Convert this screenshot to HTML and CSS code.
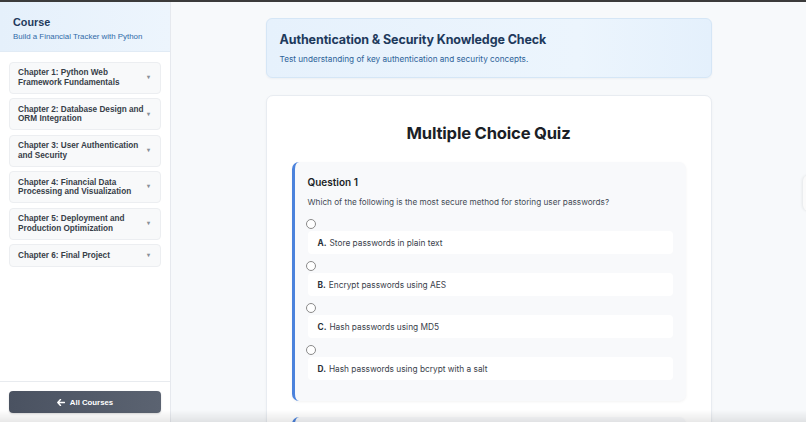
FILE: index.html
```html
<!DOCTYPE html>
<html lang="en">
<head>
<meta charset="utf-8">
<title>Authentication &amp; Security Knowledge Check</title>
<link rel="stylesheet" href="styles.css">
</head>
<body>
<div class="topbar"></div>
<div class="app">
  <aside class="sidebar">
    <div class="side-head">
      <div class="side-title">Course</div>
      <div class="side-sub">Build a Financial Tracker with Python</div>
    </div>
    <nav class="chapters">
      <div class="chapter"><span>Chapter 1: Python Web Framework Fundamentals</span><i class="caret">▾</i></div>
      <div class="chapter"><span>Chapter 2: Database Design and ORM Integration</span><i class="caret">▾</i></div>
      <div class="chapter"><span>Chapter 3: User Authentication and Security</span><i class="caret">▾</i></div>
      <div class="chapter"><span>Chapter 4: Financial Data Processing and Visualization</span><i class="caret">▾</i></div>
      <div class="chapter"><span>Chapter 5: Deployment and Production Optimization</span><i class="caret">▾</i></div>
      <div class="chapter"><span>Chapter 6: Final Project</span><i class="caret">▾</i></div>
    </nav>
    <div class="side-foot">
      <button class="back-btn"><svg width="8" height="7" viewBox="0 0 8 7"><path d="M3.5 0.5 L0.8 3.5 L3.5 6.5 M1 3.5 H7.5" fill="none" stroke="#fff" stroke-width="1.4" stroke-linecap="round" stroke-linejoin="round"/></svg>All Courses</button>
    </div>
  </aside>
  <main class="main">
    <div class="content">
      <section class="hero">
        <h1>Authentication &amp; Security Knowledge Check</h1>
        <p>Test understanding of key authentication and security concepts.</p>
      </section>
      <section class="quiz">
        <h2>Multiple Choice Quiz</h2>
        <div class="question">
          <h3>Question 1</h3>
          <p class="qtext">Which of the following is the most secure method for storing user passwords?</p>
          <div class="options">
            <label class="option"><input type="radio" name="q1"><span class="opt-box"><b>A.</b> Store passwords in plain text</span></label>
            <label class="option"><input type="radio" name="q1"><span class="opt-box"><b>B.</b> Encrypt passwords using AES</span></label>
            <label class="option"><input type="radio" name="q1"><span class="opt-box"><b>C.</b> Hash passwords using MD5</span></label>
            <label class="option"><input type="radio" name="q1"><span class="opt-box"><b>D.</b> Hash passwords using bcrypt with a salt</span></label>
          </div>
        </div>
        <div class="question next"></div>
      </section>
    </div>
  </main>
</div>
<div class="edge-tab"></div>
<div class="bottom-shade"></div>
</body>
</html>
```
FILE: styles.css
```css
* { box-sizing: border-box; }
html, body { margin: 0; padding: 0; height: 100%; overflow: hidden; }
body { background: #f7f9fb; font-family: "Inter", "Liberation Sans", sans-serif; }

.topbar { height: 2px; background: #3b3b3b; }

.app { display: flex; height: 420px; }

.sidebar {
  width: 171px; flex: none; display: flex; flex-direction: column;
  background: #fff; border-right: 1px solid #e6e9ee;
  font-family: "Liberation Sans", Arial, sans-serif;
}
.side-head {
  height: 50px; padding: 13px 13px 0;
  background: linear-gradient(90deg, #e5f0fb, #edf5fd);
  border-bottom: 1px solid #e1ebf5;
}
.side-title { font-size: 10.8px; font-weight: bold; color: #1f3a5c; line-height: 14px; }
.side-sub { font-size: 7.9px; color: #2f6aa8; margin-top: 3px; line-height: 10px; }

.chapters { flex: 1; padding: 10px 9px 9px; display: flex; flex-direction: column; gap: 4.5px; }
.chapter {
  display: flex; align-items: center; justify-content: space-between;
  padding: 5.2px 8px; border: 1px solid #eceef1; border-radius: 4px;
  background: #f8f9fa;
  font-size: 8.2px; font-weight: bold; color: #373e48; line-height: 9.8px;
}
.chapter span { max-width: 132px; }
.caret { font-style: normal; font-size: 6px; color: #8a9098; margin-right: 2px; }

.side-foot { border-top: 1px solid #e8ebef; padding: 9px; }
.back-btn {
  width: 152px; height: 22px; border: 0; border-radius: 4px;
  background: linear-gradient(90deg, #4a5261, #5b6371);
  color: #fff; font-family: "Liberation Sans", Arial, sans-serif;
  font-size: 7.8px; font-weight: bold;
  display: flex; align-items: center; justify-content: center; gap: 5px;
  box-shadow: 0 1px 2px rgba(0,0,0,0.15);
}

.main { flex: 1; overflow: hidden; }
.content { width: 446px; margin: 16px auto 0; display: flex; flex-direction: column; gap: 17px; }

.hero {
  height: 60px; padding: 13px 13px 0;
  border: 1px solid #d5e6f6; border-radius: 6px;
  background: linear-gradient(90deg, #e6f1fc, #ecf5fd 70%, #e4f0fc);
  box-shadow: 0 1px 2px rgba(30,60,100,0.05);
}
.hero h1 { margin: 0; font-size: 12.5px; font-weight: 700; color: #1e3a5c; line-height: 16px; letter-spacing: -0.1px; }
.hero p { margin: 6px 0 0; font-size: 8.2px; color: #2d6299; line-height: 11px; }

.quiz {
  background: #fff; border: 1px solid #e8ecf1; border-radius: 7px;
  padding: 25px 25px 0 25px; height: 340px;
  box-shadow: 0 1px 3px rgba(0,0,0,0.04);
}
.quiz h2 { margin: 0 0 17px; text-align: center; font-size: 16.6px; font-weight: 700; color: #1b1f27; line-height: 24px; letter-spacing: -0.2px; }

.question {
  background: #f8f9fb; border-left: 3px solid #4b82dc; border-radius: 7px;
  padding: 13px 13px 21px 13px;
  box-shadow: 0 1px 3px rgba(0,0,0,0.05);
}
.question h3 { margin: 0; font-size: 10px; font-weight: 600; color: #1b1f27; line-height: 14px; }
.qtext { margin: 7px 0 0; font-size: 8.2px; color: #444b55; line-height: 12px; }
.options { display: flex; flex-direction: column; gap: 7px; margin-top: 11px; }
.option { display: flex; flex-direction: column; align-items: flex-start; }
.option input {
  appearance: none; -webkit-appearance: none; margin: 0 0 2px -2px;
  width: 10px; height: 10px; border: 1px solid #8a8a8a; border-radius: 50%; background: #fff;
}
.opt-box {
  align-self: stretch; height: 23px; background: #fff; border-radius: 4px;
  padding: 0 10px; display: flex; align-items: center; gap: 3px;
  font-size: 8.3px; color: #3a414b;
}
.opt-box b { font-weight: 700; color: #2a3038; }

.question.next { margin-top: 16px; height: 40px; }

.edge-tab {
  position: fixed; right: -8px; top: 175px; width: 11px; height: 36px;
  background: #fafafa; border-radius: 6px 0 0 6px; box-shadow: -1px 0 3px rgba(0,0,0,0.08);
}
.bottom-shade {
  position: fixed; left: 0; right: 0; bottom: 0; height: 12px;
  background: linear-gradient(180deg, rgba(0,0,0,0), rgba(0,0,0,0.09));
  pointer-events: none;
}
```
